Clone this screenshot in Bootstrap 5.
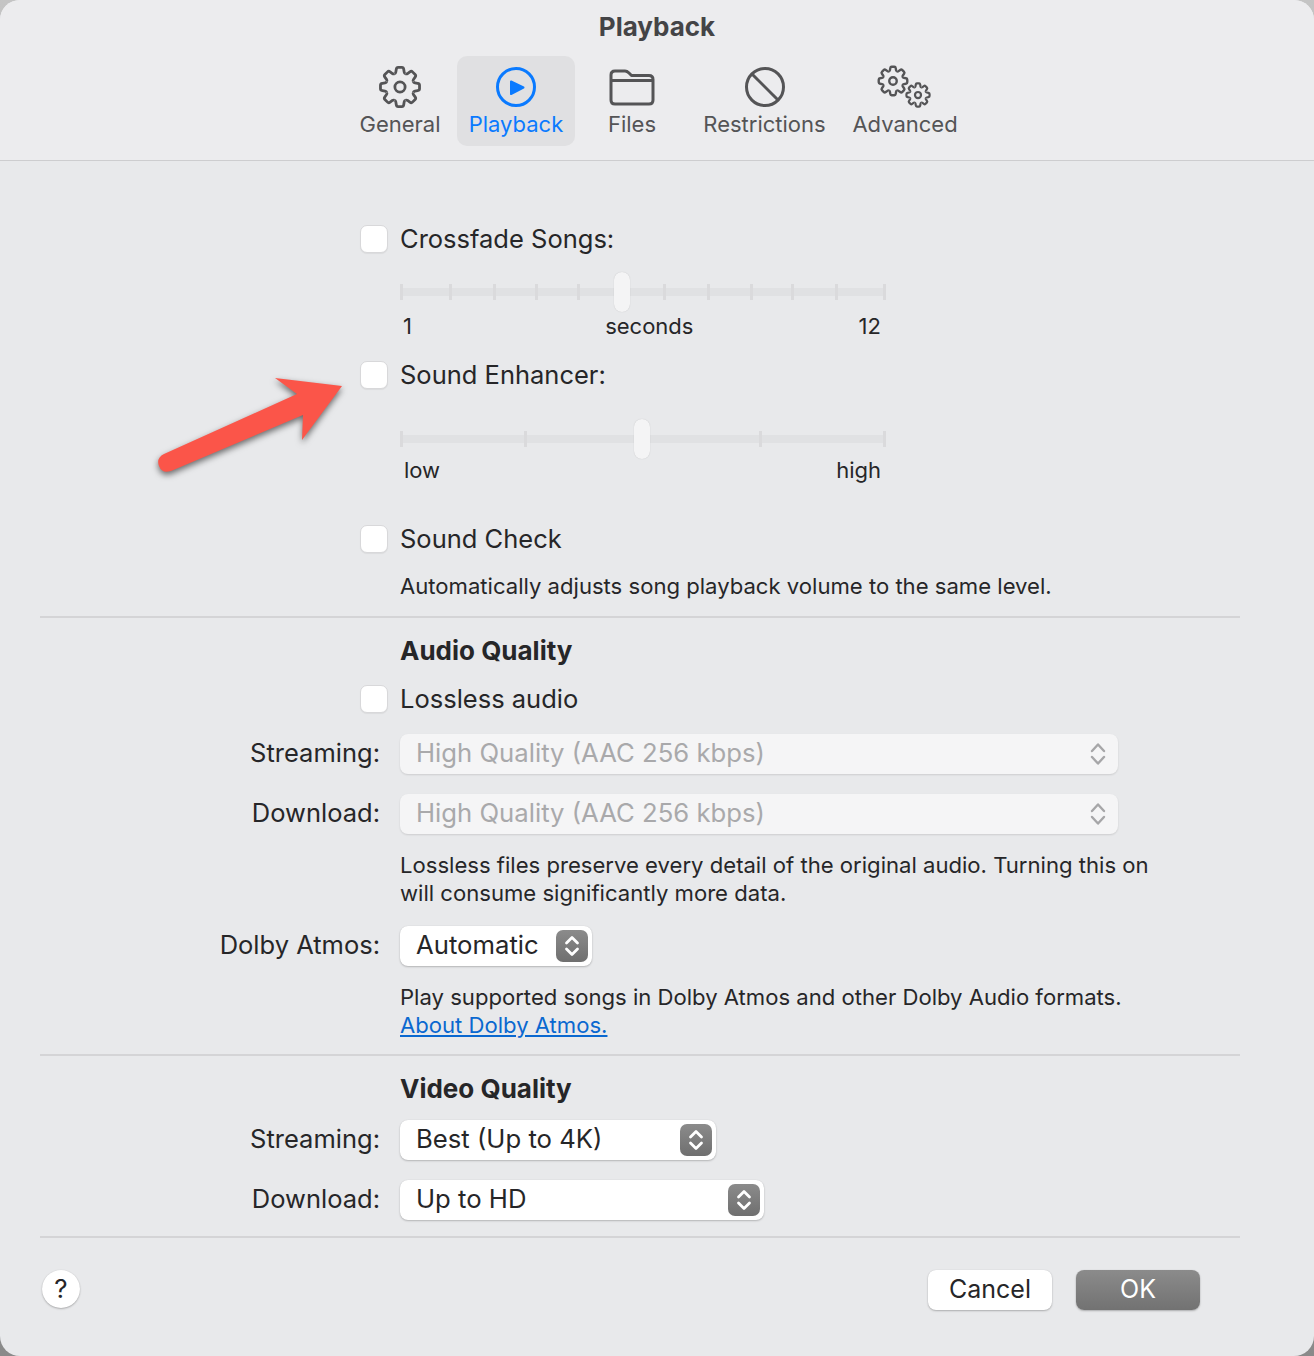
<!DOCTYPE html>
<html lang="en">
<head>
    <meta charset="UTF-8">
    <meta name="viewport" content="width=device-width, initial-scale=1.0">
    <title>Playback</title>
    <link href="https://cdn.jsdelivr.net/npm/bootstrap@5.3.0/dist/css/bootstrap.min.css" rel="stylesheet">
    <style>
        body { background: linear-gradient(#c4c4c4, #8a8a8a); font-family: "Inter", "Liberation Sans", sans-serif; }
        .prefs-window { position: relative; width: 1314px; height: 1356px; background: #e8e9eb; border-radius: 20px; overflow: hidden; color: #262628; font-size: 22.1px; line-height: 28px; }
        .prefs-head { height: 161px; background: #ececee; border-bottom: 1px solid #cdcdcf; padding-top: 13px; }
        .prefs-title { font-weight: 700; font-size: 26px; line-height: 28px; color: #444446; text-align: center; height: 43px; }
        .tab-strip { padding-right: 1px; font-size: 22px; }
        .tab-item { height: 90px; padding-top: 8px; text-align: center; color: #545456; border-radius: 10px; }
        .tab-item svg { display: block; margin: 0 auto; width: 64px; height: 46px; fill: none; stroke: #545456; stroke-width: 3; }
        .tab-item.tab-on { background: #e0e0e2; color: #0a7aff; }
        .tab-item.tab-on svg { stroke: #0a7aff; }
        .w-114 { width: 114px; } .w-118 { width: 118px; } .w-151 { width: 151px; } .w-130 { width: 130px; }
        .line-row { height: 28px; }
        .at-check { margin-left: 360px; gap: 12px; font-size: 25.5px; }
        .at-text { margin-left: 400px; }
        .form-check-input.mac-check { width: 28px; height: 28px; margin: 0; border-radius: 7px; border: 1px solid #d8d8da; background-color: #fff; box-shadow: 0 1px 1px rgba(0,0,0,.06); }
        .slider-box { position: relative; width: 486px; height: 40px; }
        .slider-box.short-box { height: 34px; }
        .slider-track { position: absolute; left: 0; right: 0; top: 50%; height: 8px; margin-top: -4px; background: #e0e1e3; border-radius: 2px; }
        .slider-tick { position: absolute; top: 50%; width: 3px; height: 16px; margin-top: -8px; background: #dadadc; }
        .slider-knob { position: absolute; top: 50%; width: 16px; height: 40px; margin-top: -20px; background: #f4f4f5; border-radius: 8px; box-shadow: 0 0 1px rgba(0,0,0,.2); }
        .scale-row { width: 486px; padding: 0 5px 0 3px; font-size: 22px; }
        .scale-row.word-row { padding-left: 4px; }
        .mid-word { margin-left: 28px; }
        .prefs-rule { margin-left: 40px; margin-right: 0; width: 1200px; height: 2px; border: 0; background: #d4d4d6; opacity: 1; }
        .section-head { font-weight: 700; font-size: 26px; }
        .field-row { height: 40px; }
        .field-name { width: 380px; text-align: right; margin-right: 20px; padding-bottom: 2px; font-size: 25.5px; }
        .mac-select { height: 40px; padding: 0 4px 0 16px; background: #fff; color: #262628; font-size: 25.7px; line-height: 26px; border: 0; border-radius: 8px; box-shadow: 0 1px 2px rgba(0,0,0,.22), 0 0 1px rgba(0,0,0,.12); }
        .mac-select:disabled { background: #f5f5f6; color: #a9a9ab; opacity: 1; padding-right: 12px; box-shadow: 0 1px 2px rgba(0,0,0,.12); }
        .select-label { padding-bottom: 2px; }
        .select-wide { width: 718px; } .select-auto { width: 192px; } .select-best { width: 316px; } .select-hd { width: 364px; }
        .step-box { width: 32px; height: 32px; border-radius: 7px; background: linear-gradient(#8b8b8b, #6f6f6f); }
        .step-box svg, .step-plain { display: block; width: 32px; height: 32px; fill: none; stroke: #fff; stroke-width: 2.8; stroke-linecap: round; stroke-linejoin: round; }
        .step-plain { width: 16px; stroke: #a6a6a8; stroke-width: 2.4; }
        a.atmos-link { color: #0a68d0; }
        .sp-15 { margin-top: 15px; } .sp-16 { margin-top: 16px; } .sp-17 { margin-top: 17px; } .sp-19 { margin-top: 19px; }
        .sp-20 { margin-top: 20px; } .sp-21 { margin-top: 21px; } .sp-33 { margin-top: 33px; }
        .sp-41 { margin-top: 41px; } .sp-64 { margin-top: 64px; } .sp-32 { margin-top: 32px; }
        .prefs-foot { padding: 0 114px 0 42px; }
        .mac-btn { width: 124px; height: 40px; padding: 0 0 2px; font-size: 25px; line-height: 28px; border: 0; border-radius: 8px; background: #fff; color: #262628; box-shadow: 0 1px 2px rgba(0,0,0,.25), 0 0 1px rgba(0,0,0,.12); }
        .mac-btn.btn-ok { margin-left: 24px; background: linear-gradient(#8b8b8b, #727272); color: #fff; }
        .mac-btn.btn-help { width: 38px; height: 38px; padding: 0; border-radius: 50%; font-size: 26px; }
        .callout-arrow { position: absolute; left: 150px; top: 370px; width: 200px; height: 115px; overflow: visible; filter: drop-shadow(0 3px 3px rgba(0,0,0,.55)); }
    </style>
</head>
<body class="m-0">
    <div class="prefs-window">
        <!-- Заголовок и вкладки -->
        <div class="prefs-head">
            <div class="prefs-title">Playback</div>
            <nav class="d-flex justify-content-center tab-strip">
                <div class="tab-item w-114">
                    <svg viewBox="0 0 64 46">
                        <defs>
                            <path id="gearTooth" d="M-5.9-14.3Q-4.7-14.7-4.5-16L-4-19Q-3.7-21-2-21H2Q3.7-21 4-19L4.5-16Q4.7-14.7 5.9-14.3"/>
                            <g id="gearShape">
                                <use href="#gearTooth"/>
                                <use href="#gearTooth" transform="rotate(45)"/>
                                <use href="#gearTooth" transform="rotate(90)"/>
                                <use href="#gearTooth" transform="rotate(135)"/>
                                <use href="#gearTooth" transform="rotate(180)"/>
                                <use href="#gearTooth" transform="rotate(225)"/>
                                <use href="#gearTooth" transform="rotate(270)"/>
                                <use href="#gearTooth" transform="rotate(315)"/>
                                <circle r="5.5"/>
                            </g>
                        </defs>
                        <use href="#gearShape" transform="translate(32 23) scale(.93)" stroke-width="3"/>
                    </svg>
                    General
                </div>
                <div class="tab-item w-118 tab-on">
                    <svg viewBox="0 0 64 46">
                        <circle cx="32" cy="23" r="18.5"/>
                        <path d="M27 17.5L39.5 23.5L27 30Z" fill="#0a7aff" stroke-width="2" stroke-linejoin="round"/>
                    </svg>
                    Playback
                </div>
                <div class="tab-item w-114">
                    <svg viewBox="0 0 64 46">
                        <path d="M11 11Q11 7 15 7H25Q27 7 29 9L31.500 11.500H49Q53 11.500 53 15.500V36Q53 40 49 40H15Q11 40 11 36Z" stroke-linejoin="round"/>
                        <path d="M11 16.500H53"/>
                    </svg>
                    Files
                </div>
                <div class="tab-item w-151">
                    <svg viewBox="0 0 64 46">
                        <circle cx="32" cy="23" r="18.500"/>
                        <path d="M19 10L45 36"/>
                    </svg>
                    Restrictions
                </div>
                <div class="tab-item w-130">
                    <svg viewBox="0 0 64 46">
                        <use href="#gearShape" transform="translate(20 17) scale(.68)" stroke-width="3.500"/>
                        <use href="#gearShape" transform="translate(45 31) scale(.55)" stroke-width="4"/>
                    </svg>
                    Advanced
                </div>
            </nav>
        </div>

        <!-- Кроссфейд -->
        <div class="d-flex align-items-center line-row at-check sp-64">
            <input class="form-check-input mac-check" type="checkbox" id="crossfade">
            <label for="crossfade">Crossfade Songs:</label>
        </div>
        <div class="slider-box at-text sp-19">
            <div class="slider-track"></div>
            <span class="slider-tick" style="left:0"></span>
            <span class="slider-tick" style="left:49px"></span>
            <span class="slider-tick" style="left:93px"></span>
            <span class="slider-tick" style="left:135px"></span>
            <span class="slider-tick" style="left:177px"></span>
            <span class="slider-tick" style="left:263px"></span>
            <span class="slider-tick" style="left:307px"></span>
            <span class="slider-tick" style="left:350px"></span>
            <span class="slider-tick" style="left:391px"></span>
            <span class="slider-tick" style="left:435px"></span>
            <span class="slider-tick" style="left:483px"></span>
            <span class="slider-knob" style="left:214px"></span>
        </div>
        <div class="d-flex justify-content-between line-row at-text scale-row">
            <span>1</span><span class="mid-word">seconds</span><span>12</span>
        </div>

        <!-- Улучшение звука -->
        <div class="d-flex align-items-center line-row at-check sp-21">
            <input class="form-check-input mac-check" type="checkbox" id="enhancer">
            <label for="enhancer">Sound Enhancer:</label>
        </div>
        <div class="slider-box short-box at-text sp-33">
            <div class="slider-track"></div>
            <span class="slider-tick" style="left:0"></span>
            <span class="slider-tick" style="left:124px"></span>
            <span class="slider-tick" style="left:359px"></span>
            <span class="slider-tick" style="left:483px"></span>
            <span class="slider-knob" style="left:234px"></span>
        </div>
        <div class="d-flex justify-content-between line-row at-text scale-row word-row">
            <span>low</span><span>high</span>
        </div>

        <div class="d-flex align-items-center line-row at-check sp-41">
            <input class="form-check-input mac-check" type="checkbox" id="soundCheck">
            <label for="soundCheck">Sound Check</label>
        </div>
        <div class="line-row at-text sp-19">Automatically adjusts song playback volume to the same level.</div>
        <hr class="prefs-rule sp-16 mb-0">

        <!-- Качество аудио -->
        <div class="line-row at-text section-head sp-19">Audio Quality</div>
        <div class="d-flex align-items-center line-row at-check sp-20">
            <input class="form-check-input mac-check" type="checkbox" id="lossless">
            <label for="lossless">Lossless audio</label>
        </div>
        <div class="d-flex align-items-center field-row sp-21">
            <div class="field-name">Streaming:</div>
            <button class="btn mac-select select-wide d-flex align-items-center justify-content-between" disabled>
                <span class="select-label">High Quality (AAC 256 kbps)</span>
                <svg class="step-plain" viewBox="0 0 16 32"><path d="M2 13L8 6.500L14 13M2 19L8 25.500L14 19"/></svg>
            </button>
        </div>
        <div class="d-flex align-items-center field-row sp-20">
            <div class="field-name">Download:</div>
            <button class="btn mac-select select-wide d-flex align-items-center justify-content-between" disabled>
                <span class="select-label">High Quality (AAC 256 kbps)</span>
                <svg class="step-plain" viewBox="0 0 16 32"><path d="M2 13L8 6.500L14 13M2 19L8 25.500L14 19"/></svg>
            </button>
        </div>
        <p class="at-text mb-0 sp-17">Lossless files preserve every detail of the original audio. Turning this on<br>will consume significantly more data.</p>
        <div class="d-flex align-items-center field-row sp-19">
            <div class="field-name">Dolby Atmos:</div>
            <button class="btn mac-select select-auto d-flex align-items-center justify-content-between">
                <span class="select-label">Automatic</span>
                <span class="step-box"><svg viewBox="0 0 32 32"><path d="M10.500 13L16 7.500L21.500 13M10.500 19L16 24.500L21.500 19"/></svg></span>
            </button>
        </div>
        <p class="at-text mb-0 sp-17">Play supported songs in Dolby Atmos and other Dolby Audio formats.<br><a class="atmos-link" href="#">About Dolby Atmos.</a></p>
        <hr class="prefs-rule sp-15 mb-0">

        <!-- Качество видео -->
        <div class="line-row at-text section-head sp-19">Video Quality</div>
        <div class="d-flex align-items-center field-row sp-17">
            <div class="field-name">Streaming:</div>
            <button class="btn mac-select select-best d-flex align-items-center justify-content-between">
                <span class="select-label">Best (Up to 4K)</span>
                <span class="step-box"><svg viewBox="0 0 32 32"><path d="M10.500 13L16 7.500L21.500 13M10.500 19L16 24.500L21.500 19"/></svg></span>
            </button>
        </div>
        <div class="d-flex align-items-center field-row sp-20">
            <div class="field-name">Download:</div>
            <button class="btn mac-select select-hd d-flex align-items-center justify-content-between">
                <span class="select-label">Up to HD</span>
                <span class="step-box"><svg viewBox="0 0 32 32"><path d="M10.500 13L16 7.500L21.500 13M10.500 19L16 24.500L21.500 19"/></svg></span>
            </button>
        </div>
        <hr class="prefs-rule sp-16 mb-0">

        <!-- Кнопки -->
        <div class="d-flex align-items-start prefs-foot sp-32">
            <button class="btn mac-btn btn-help">?</button>
            <button class="btn mac-btn ms-auto">Cancel</button>
            <button class="btn mac-btn btn-ok">OK</button>
        </div>

        <!-- Стрелка-выноска поверх окна -->
        <svg class="callout-arrow" viewBox="0 0 200 115">
            <path d="M192 16L125 8L147 24L14 84Q6 88 9 96Q12 104 21 101L153 45L152 70Z" fill="#fb5549"/>
        </svg>
    </div>
    <script src="https://cdn.jsdelivr.net/npm/bootstrap@5.3.0/dist/js/bootstrap.bundle.min.js"></script>
</body>
</html>
